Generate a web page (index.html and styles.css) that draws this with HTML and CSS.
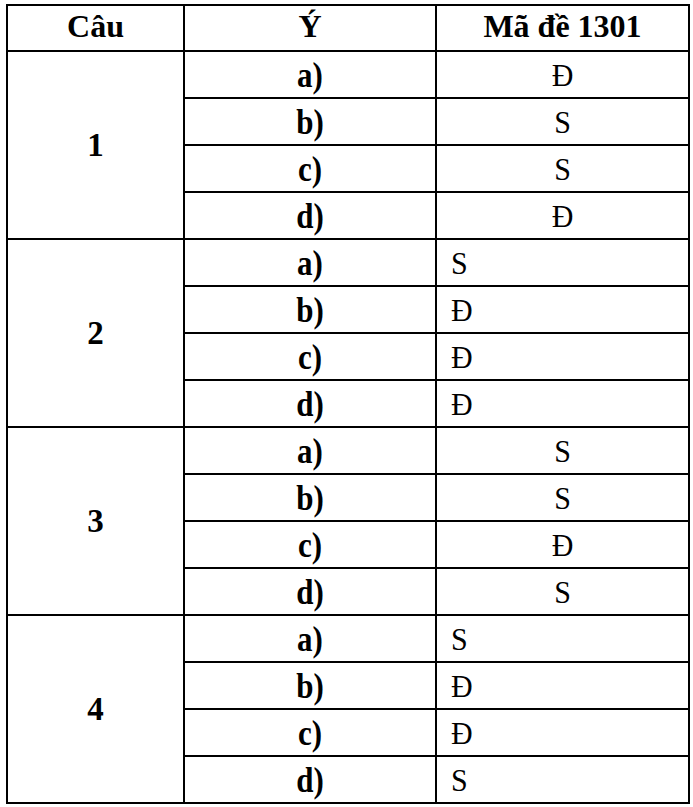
FILE: index.html
```html
<!DOCTYPE html>
<html lang="vi">
<head>
<meta charset="utf-8">
<title>Đáp án</title>
<link rel="stylesheet" href="styles.css">
</head>
<body>
<div class="page">
<table class="answers">
<colgroup><col class="c-cau"><col class="c-y"><col class="c-ma"></colgroup>
<thead>
<tr><th>Câu</th><th>Ý</th><th>Mã đề 1301</th></tr>
</thead>
<tbody>
<tr><td rowspan="4" class="q">1</td><td class="part"><span>a)</span></td><td class="ans"><span>Đ</span></td></tr>
<tr><td class="part"><span>b)</span></td><td class="ans"><span>S</span></td></tr>
<tr><td class="part"><span>c)</span></td><td class="ans"><span>S</span></td></tr>
<tr><td class="part"><span>d)</span></td><td class="ans"><span>Đ</span></td></tr>

<tr><td rowspan="4" class="q">2</td><td class="part"><span>a)</span></td><td class="ans left"><span>S</span></td></tr>
<tr><td class="part"><span>b)</span></td><td class="ans left"><span>Đ</span></td></tr>
<tr><td class="part"><span>c)</span></td><td class="ans left"><span>Đ</span></td></tr>
<tr><td class="part"><span>d)</span></td><td class="ans left"><span>Đ</span></td></tr>

<tr><td rowspan="4" class="q">3</td><td class="part"><span>a)</span></td><td class="ans"><span>S</span></td></tr>
<tr><td class="part"><span>b)</span></td><td class="ans"><span>S</span></td></tr>
<tr><td class="part"><span>c)</span></td><td class="ans"><span>Đ</span></td></tr>
<tr><td class="part"><span>d)</span></td><td class="ans"><span>S</span></td></tr>

<tr><td rowspan="4" class="q">4</td><td class="part"><span>a)</span></td><td class="ans left"><span>S</span></td></tr>
<tr><td class="part"><span>b)</span></td><td class="ans left"><span>Đ</span></td></tr>
<tr><td class="part"><span>c)</span></td><td class="ans left"><span>Đ</span></td></tr>
<tr><td class="part"><span>d)</span></td><td class="ans left"><span>S</span></td></tr>
</tbody>
</table>
</div>
</body>
</html>
```
FILE: styles.css
```css
html, body {
  margin: 0;
  padding: 0;
  background: #ffffff;
}

.page {
  padding: 4px 0 0 6px;
}

.answers {
  border-collapse: separate;
  border-spacing: 0;
  table-layout: fixed;
  width: 684px;
  border-top: 2px solid #000;
  border-left: 2px solid #000;
  font-family: "Liberation Serif", "Times New Roman", serif;
  color: #000;
}

.c-cau { width: 177px; }
.c-y { width: 252px; }
.c-ma { width: 253px; }

.answers th,
.answers td {
  border-right: 2px solid #000;
  border-bottom: 2px solid #000;
  padding: 0;
  text-align: center;
  vertical-align: middle;
  line-height: normal;
}

.answers thead tr { height: 46px; }
.answers tbody tr { height: 47px; }

.answers th {
  font-size: 32px;
  font-weight: bold;
  padding-bottom: 3px;
}

.q {
  font-size: 33px;
  font-weight: bold;
  padding-bottom: 3px;
}

.part {
  font-size: 31px;
  font-weight: bold;
}

.part span {
  display: inline-block;
  transform: scaleY(1.18);
}

.ans {
  font-size: 30px;
  padding-bottom: 9px;
}

.ans span {
  display: inline-block;
  transform: scaleY(1.08);
}

.answers td.left {
  text-align: left;
  padding-left: 14px;
}
```
